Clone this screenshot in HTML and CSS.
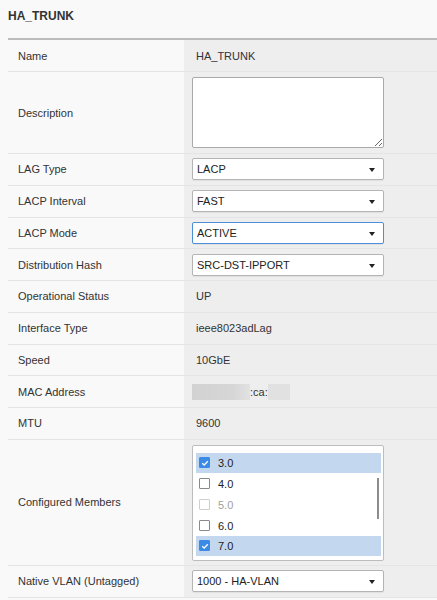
FILE: index.html
```html
<!DOCTYPE html>
<html>
<head>
<meta charset="utf-8">
<link rel="stylesheet" href="styles.css">
</head>
<body>
<div class="page">
  <div class="title">HA_TRUNK</div>
  <div class="table">
    <div class="row r-name">
      <div class="label">Name</div>
      <div class="value text">HA_TRUNK</div>
    </div>
    <div class="row r-desc">
      <div class="label">Description</div>
      <div class="value"><textarea class="ta"></textarea></div>
    </div>
    <div class="row std">
      <div class="label">LAG Type</div>
      <div class="value"><div class="sel">LACP<span class="arrow"></span></div></div>
    </div>
    <div class="row std">
      <div class="label">LACP Interval</div>
      <div class="value"><div class="sel">FAST<span class="arrow"></span></div></div>
    </div>
    <div class="row std">
      <div class="label">LACP Mode</div>
      <div class="value"><div class="sel focus">ACTIVE<span class="arrow"></span></div></div>
    </div>
    <div class="row std">
      <div class="label">Distribution Hash</div>
      <div class="value"><div class="sel">SRC-DST-IPPORT<span class="arrow"></span></div></div>
    </div>
    <div class="row std">
      <div class="label">Operational Status</div>
      <div class="value text">UP</div>
    </div>
    <div class="row std">
      <div class="label">Interface Type</div>
      <div class="value text">ieee8023adLag</div>
    </div>
    <div class="row std">
      <div class="label">Speed</div>
      <div class="value text">10GbE</div>
    </div>
    <div class="row std">
      <div class="label">MAC Address</div>
      <div class="value"><span class="blur b1"></span><span class="mac">:ca:</span><span class="blur b2"></span></div>
    </div>
    <div class="row std">
      <div class="label">MTU</div>
      <div class="value text">9600</div>
    </div>
    <div class="row r-members">
      <div class="label">Configured Members</div>
      <div class="value">
        <div class="list">
          <div class="item sel-item"><span class="cb on"><svg viewBox="0 0 10 10" width="10" height="10"><path d="M2.2 5.2 L4.2 7 L7.8 3.2" fill="none" stroke="#fff" stroke-width="1.3"/></svg></span>3.0</div>
          <div class="item"><span class="cb"></span>4.0</div>
          <div class="item dis"><span class="cb"></span>5.0</div>
          <div class="item"><span class="cb"></span>6.0</div>
          <div class="item sel-item"><span class="cb on"><svg viewBox="0 0 10 10" width="10" height="10"><path d="M2.2 5.2 L4.2 7 L7.8 3.2" fill="none" stroke="#fff" stroke-width="1.3"/></svg></span>7.0</div>
          <span class="scroll"></span>
        </div>
      </div>
    </div>
    <div class="row r-vlan">
      <div class="label">Native VLAN (Untagged)</div>
      <div class="value"><div class="sel">1000 - HA-VLAN<span class="arrow"></span></div></div>
    </div>
  </div>
</div>
</body>
</html>
```

FILE: styles.css
```css
html, body {
  margin: 0;
  padding: 0;
  background: #f9f9f9;
}
body {
  font-family: "Liberation Sans", Arial, sans-serif;
  font-size: 11px;
  color: #333;
}
.page {
  padding-left: 8px;
}
.title {
  height: 38px;
  box-sizing: border-box;
  padding-top: 9px;
  line-height: 14px;
  font-size: 12px;
  font-weight: bold;
  color: #333;
}
.table {
  border-top: 2px solid #bcbcbc;
}
.row {
  display: flex;
  box-sizing: border-box;
  border-bottom: 1px solid #e4e4e4;
}
.r-name { height: 32px; }
.r-desc { height: 82px; }
.std { height: 31.75px; }
.r-members { height: 126px; }
.r-vlan { height: 32px; }
.label {
  width: 176px;
  flex: none;
  box-sizing: border-box;
  padding-left: 10px;
  display: flex;
  align-items: center;
  background: #f9f9f9;
}
.value {
  flex: 1;
  box-sizing: border-box;
  padding-left: 8px;
  display: flex;
  align-items: center;
  background: #eeeeee;
}
.value.text {
  padding-left: 12px;
}
.ta {
  display: block;
  width: 192px;
  height: 71px;
  box-sizing: border-box;
  margin: 0;
  border: 1px solid #a9a9a9;
  border-radius: 2px;
  background: #fff;
  margin-top: -1px;
}
.sel {
  position: relative;
  width: 192px;
  height: 22px;
  box-sizing: border-box;
  border: 1px solid #b4b4b4;
  border-radius: 2px;
  background: #fff;
  padding-left: 4px;
  line-height: 20px;
  color: #222;
  box-shadow: 0 1px 1px rgba(0,0,0,0.06);
}
.sel.focus {
  border-color: #4a8fd8;
}
.arrow {
  position: absolute;
  right: 8px;
  top: 9px;
  width: 0;
  height: 0;
  border-left: 3px solid transparent;
  border-right: 3px solid transparent;
  border-top: 4px solid #222;
}
.blur {
  display: inline-block;
  height: 16px;
}
.b1 {
  width: 58px;
  background: linear-gradient(90deg, #d2d2d2, #d6d6d6 70%, #e2e2e2);
}
.b2 {
  width: 22px;
  background: #e1e1e1;
}
.mac {
  color: #333;
}
.list {
  position: relative;
  width: 192px;
  height: 116px;
  box-sizing: border-box;
  border: 1px solid #bdbdbd;
  border-radius: 2px;
  background: #fff;
  padding: 7px 2px 0 3px;
  margin-top: 1px;
}
.item {
  height: 20.8px;
  display: flex;
  align-items: center;
  padding-left: 3px;
  color: #222;
}
.item.sel-item {
  background: #c3d7ef;
  height: 19.8px;
  margin-bottom: 1px;
}
.item.dis {
  color: #a0a0a0;
}
.cb {
  display: inline-block;
  width: 11px;
  height: 11px;
  box-sizing: border-box;
  border: 1px solid #8a8a8a;
  border-radius: 1px;
  background: #fff;
  margin-right: 8px;
  position: relative;
}
.dis .cb {
  border-color: #cfcfcf;
}
.cb.on {
  background: #3b8ae6;
  border-color: #3b8ae6;
}
.cb.on svg {
  position: absolute;
  left: -0.5px;
  top: -0.5px;
}
.scroll {
  position: absolute;
  left: 184px;
  top: 32px;
  width: 2px;
  height: 41px;
  background: #8c8c8c;
}
```
